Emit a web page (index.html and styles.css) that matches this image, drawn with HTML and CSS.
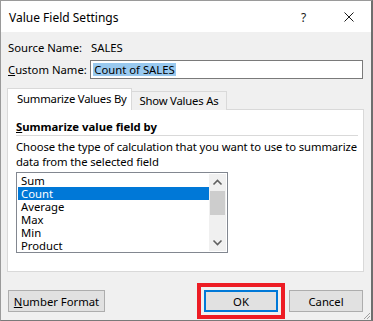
FILE: index.html
```html
<!DOCTYPE html>
<html lang="en">
<head>
    <meta charset="UTF-8">
    <meta name="viewport" content="width=device-width, initial-scale=1.0">
    <title>Value Field Settings</title>
    <link rel="stylesheet" href="styles.css">
</head>

<body>
    <div class="dialog">
        <div class="titlebar">
            <span class="title">Value Field Settings</span>
            <span class="help">?</span>
            <span class="close">
                <svg width="10" height="10" viewBox="0 0 10 10">
                    <path d="M0.5 0.5 L9.5 9.5 M9.5 0.5 L0.5 9.5" stroke="#1a1a1a" stroke-width="1" fill="none"/>
                </svg>
            </span>
        </div>

        <div class="body">
            <div class="row source-row">
                <span class="label">Source Name:</span>
                <span>SALES</span>
            </div>
            <div class="row custom-row">
                <label class="label"><u>C</u>ustom Name:</label>
                <div class="text-input"><span class="selected-text">Count of SALES</span></div>
            </div>

            <div class="tabs">
                <div class="tab active">Summarize Values By</div>
                <div class="tab">Show Values As</div>
            </div>
            <div class="panel">
                <div class="group-title"><u>S</u>ummarize value field by</div>
                <p class="desc">Choose the type of calculation that you want to use to summarize data from the selected field</p>
                <div class="listbox">
                    <ul class="items">
                        <li>Sum</li>
                        <li class="selected">Count</li>
                        <li>Average</li>
                        <li>Max</li>
                        <li>Min</li>
                        <li>Product</li>
                    </ul>
                    <div class="scrollbar">
                        <svg class="arrow" width="17" height="17" viewBox="0 0 17 17">
                            <path d="M4.5 10.5 L8.5 6.5 L12.5 10.5" stroke="#606060" stroke-width="1.6" fill="none"/>
                        </svg>
                        <div class="track"><div class="thumb"></div></div>
                        <svg class="arrow" width="17" height="17" viewBox="0 0 17 17">
                            <path d="M4.5 6.5 L8.5 10.5 L12.5 6.5" stroke="#606060" stroke-width="1.6" fill="none"/>
                        </svg>
                    </div>
                </div>
            </div>

            <div class="buttons">
                <button class="btn"><u>N</u>umber Format</button>
                <span class="highlight">
                    <button class="btn default">OK</button>
                </span>
                <button class="btn">Cancel</button>
            </div>
        </div>
        <svg class="grip" width="10" height="10" viewBox="0 0 10 10">
            <path d="M9 3 L3 9 M9 6 L6 9" stroke="#a0a0a0" stroke-width="1"/>
        </svg>
    </div>
</body>
</html>
```

FILE: styles.css
```css
* {
    box-sizing: border-box;
}

body {
    margin: 0;
    font-family: "Noto Sans", "Open Sans", sans-serif;
    font-size: 11.3px;
    color: #000;
    background: #f0f0f0;
}

.dialog {
    position: relative;
    width: 373px;
    height: 321px;
    background: #f0f0f0;
    border: 1px solid #9a9a9a;
    border-right: 2px solid #6e6e6e;
    border-bottom: 1px solid #7a7a7a;
    overflow: hidden;
}

.titlebar {
    display: flex;
    align-items: center;
    height: 31px;
    background: white;
    padding-left: 8px;
    padding-top: 1px;
}

.title {
    flex: 1;
    font-size: 12px;
}

.help {
    width: 43px;
    font-size: 12px;
    color: #1a1a1a;
}

.close {
    width: 27px;
    display: flex;
}

.body {
    padding: 0 8px 0 6px;
}

.row {
    display: flex;
    align-items: center;
    padding-left: 1px;
}

.source-row {
    height: 16px;
    margin-top: 7px;
}

.custom-row {
    margin-top: 5px;
}

.label {
    width: 83px;
}

.text-input {
    width: 275px;
    height: 19px;
    background: white;
    border: 1px solid #7a7a7a;
    padding: 2px 2px;
    display: flex;
    align-items: center;
}

.selected-text {
    background: #99c9ef;
    line-height: 13px;
    padding: 0 1px;
}

.tabs {
    display: flex;
    align-items: flex-end;
    margin-top: 9px;
    height: 22px;
    position: relative;
    z-index: 1;
}

.tab {
    width: 95px;
    height: 19px;
    line-height: 18px;
    text-align: center;
    letter-spacing: -0.2px;
    white-space: nowrap;
    border: 1px solid #d9d9d9;
    border-left: none;
    border-bottom: none;
    background: #f0f0f0;
}

.tab.active {
    width: 125px;
    height: 22px;
    padding-left: 9px;
    line-height: 20px;
    text-align: left;
    background: white;
    border-left: 1px solid #d9d9d9;
}

.panel {
    width: 357px;
    height: 163px;
    margin-top: -1px;
    background: white;
    border: 1px solid #d9d9d9;
    padding: 9px 3px 0 8px;
}

.group-title {
    font-weight: bold;
    line-height: 16px;
    border-bottom: 1px solid #d9d9d9;
    margin-right: 2px;
}

.desc {
    margin: 3px 0 0;
    line-height: 15px;
    letter-spacing: -0.1px;
}

.listbox {
    display: flex;
    width: 212px;
    height: 81px;
    margin-top: 3px;
    border: 1px solid #828790;
    padding: 1px;
}

.items {
    flex: 1;
    list-style: none;
    margin: 0;
    padding: 0;
}

.items li {
    height: 13px;
    line-height: 13px;
    padding-left: 3px;
}

.items li.selected {
    background: #0078d7;
    color: white;
}

.scrollbar {
    width: 17px;
    display: flex;
    flex-direction: column;
    background: #f0f0f0;
}

.arrow {
    display: block;
    flex: none;
}

.track {
    flex: 1;
}

.thumb {
    height: 24px;
    margin: 0 1px;
    background: #cdcdcd;
}

.buttons {
    display: flex;
    align-items: center;
    margin-top: 11px;
    padding-left: 1px;
}

.btn {
    font-family: inherit;
    font-size: 11.3px;
    height: 22px;
    width: 74px;
    background: #e1e1e1;
    border: 1px solid #adadad;
    padding: 0;
    color: #000;
}

.buttons > .btn:first-child {
    width: 97px;
}

.highlight {
    display: flex;
    margin-left: auto;
    margin-right: 4px;
    border: 4px solid #ed1c24;
    padding: 3px;
    background: #f0f0f0;
}

.btn.default {
    border: 2px solid #0078d7;
}

.grip {
    position: absolute;
    right: 0;
    bottom: 0;
}
```
